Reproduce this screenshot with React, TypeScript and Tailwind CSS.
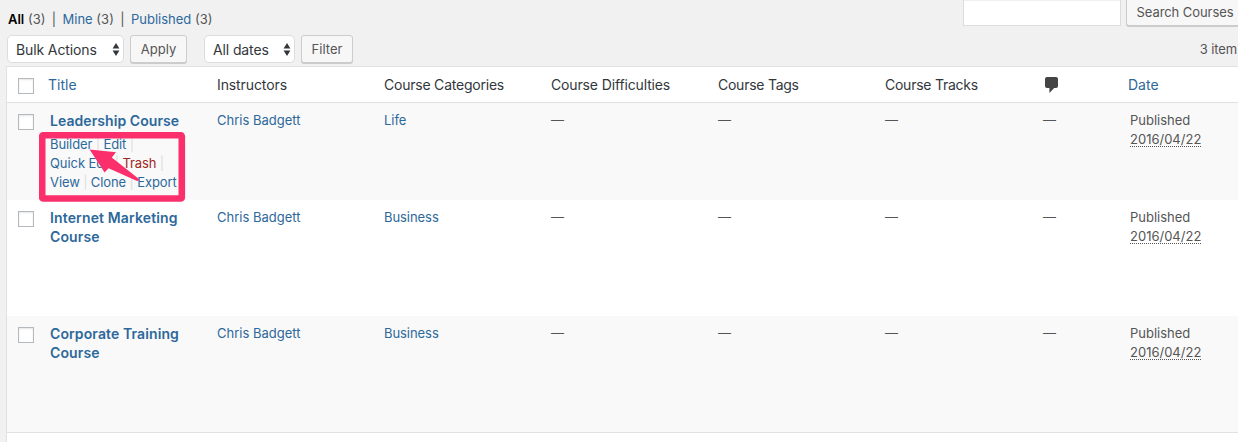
import type { ReactNode } from 'react';

const LINK = 'text-[#2d689b]';
const GRID = 'grid grid-cols-[33px_167px_167px_167px_167px_167px_158px_87px_160px]';

const courses = [
    { title: ['Leadership Course'], category: 'Life', height: 'h-[97px]', bg: 'bg-[#f9f9f9]', track: 'tracking-[0.06px]', actions: true },
    { title: ['Internet Marketing', 'Course'], category: 'Business', height: 'h-[116px]', bg: 'bg-white', track: 'tracking-[0.14px]', actions: false },
    { title: ['Corporate Training', 'Course'], category: 'Business', height: 'h-[116px]', bg: 'bg-[#f9f9f9]', track: 'tracking-[0.11px]', actions: false },
];

const headings = [
    { label: 'Instructors', track: 'tracking-[-0.1px]' },
    { label: 'Course Categories', track: 'tracking-[-0.22px]' },
    { label: 'Course Difficulties', track: 'tracking-[-0.14px]' },
    { label: 'Course Tags', track: 'tracking-[-0.25px]' },
    { label: 'Course Tracks', track: 'tracking-[-0.25px]' },
];

function Checkbox() {
    return <span className="block h-4 w-4 border border-[#b4b9be] bg-white shadow-[inset_0_1px_2px_rgba(0,0,0,0.1)]" />;
}

function Select({ label, width }: { label: string; width: string }) {
    return (
        <div className={`flex h-7 items-center justify-between rounded-[5px] border border-[#ddd] bg-white pl-2 pr-[3px] text-[14px] tracking-[-0.12px] text-[#32373c] ${width}`}>
            <span>{label}</span>
            <svg className="h-[13px] w-[8px]" viewBox="0 0 8 13" fill="#32373c">
                <path d="M4 0L7.4 5.4H0.6zM4 13L0.6 7.6H7.4z" />
            </svg>
        </div>
    );
}

function Button({ children, className }: { children: ReactNode; className: string }) {
    return (
        <button className={`flex items-center justify-center rounded-[3px] border border-[#ccc] bg-[#f7f7f7] pt-px text-[13px] text-[#555] shadow-[0_1px_0_#ccc] ${className}`}>
            {children}
        </button>
    );
}

function Sep() {
    return <span className="mx-[3.4px] text-[#ddd]">|</span>;
}

function RowActions() {
    return (
        <div className={`relative mt-[5px] text-[13px] leading-[19px] tracking-[-0.08px] ${LINK}`}>
            <div>Builder<Sep />Edit<Sep /></div>
            <div>Quick Edit<Sep /><span className="text-[#a02622]">Trash</span><Sep /></div>
            <div>View<Sep />Clone<Sep />Export</div>
            {/* callout drawn over the row actions */}
            <svg className="absolute -left-[11px] -top-[4px] h-[71px] w-[147px]" viewBox="39 131 147 71">
                <rect x="42.2" y="135.3" width="139.6" height="63.2" rx="1" fill="none" stroke="#fb2f6c" strokeWidth="6.6" />
                <path d="M89.6 149.6L116 152.2L111.8 157.6L139.3 179.2Q138.5 181.5 136.5 180.8L108.6 168.2L104.6 172.4z" fill="#fb2f6c" />
            </svg>
        </div>
    );
}

export default function App() {
    return (
        <div className="h-[442px] w-[1238px] overflow-hidden bg-[#f1f1f1] font-['Inter','Liberation_Sans',sans-serif] text-[13px] text-[#555] whitespace-nowrap">
            <div className="flex h-[35px] justify-between">
                <div className="flex gap-[6.4px] pl-2 pt-[10px] leading-[19px]">
                    <span><b className="font-semibold text-black">All</b> (3)</span>
                    <span>|</span>
                    <span><span className={LINK}>Mine</span> (3)</span>
                    <span>|</span>
                    <span><span className={LINK}>Published</span> (3)</span>
                </div>
                <div className="flex gap-[5px]">
                    <div className="h-[26px] w-[158px] border border-t-0 border-[#ddd] bg-white shadow-[inset_0_1px_0_rgba(0,0,0,0.06)]" />
                    <Button className="h-[26px] w-[118px] -mr-[6px] rounded-t-none border-t-0 tracking-[-0.07px]">Search Courses</Button>
                </div>
            </div>

            <div className="flex h-[31px] items-start pl-[7px]">
                <Select label="Bulk Actions" width="w-[117px]" />
                <Button className="ml-[6px] h-[28px] w-[57px]">Apply</Button>
                <div className="w-[17px]" />
                <Select label="All dates" width="w-[91px]" />
                <Button className="ml-[6px] h-[28px] w-[52px]">Filter</Button>
                <span className="ml-auto pt-[5px] pr-px leading-[19px] tracking-[-0.1px]">3 item</span>
            </div>

            <div className="h-[400px] w-[1273px] border border-[#e1e1e1] bg-white ml-[6px]">
                <div className={`${GRID} h-9 items-center border-b border-[#e1e1e1] text-[14px] text-[#32373c]`}>
                    <div className="pl-[11px] pt-[2px]"><Checkbox /></div>
                    <div className={`pl-2 ${LINK}`}>Title</div>
                    {headings.map((h) => (
                        <div key={h.label} className={`pl-[10px] ${h.track}`}>{h.label}</div>
                    ))}
                    <div className="pl-[12px]">
                        <svg className="h-[16px] w-[13px]" viewBox="0 0 13 16" fill="#444">
                            <path d="M2 0H11Q13 0 13 2V9Q13 11 11 11H9.2L4.4 16V11H2Q0 11 0 9V2Q0 0 2 0z" />
                        </svg>
                    </div>
                    <div className={`pl-2 ${LINK}`}>Date</div>
                </div>

                {courses.map((c) => (
                    <div key={c.title[0]} className={`${GRID} ${c.height} ${c.bg} pt-2 leading-[19px]`}>
                        <div className="pl-[11px] pt-[3px]"><Checkbox /></div>
                        <div className="pl-[10px]">
                            <div className={`text-[14px] font-semibold ${c.track} ${LINK}`}>
                                {c.title.map((line) => <div key={line}>{line}</div>)}
                            </div>
                            {c.actions && <RowActions />}
                        </div>
                        <div className={`pl-[10px] ${LINK}`}>Chris Badgett</div>
                        <div className={`pl-[10px] tracking-[-0.06px] ${LINK}`}>{c.category}</div>
                        <div className="pl-[10px]">—</div>
                        <div className="pl-[10px]">—</div>
                        <div className="pl-[10px]">—</div>
                        <div className="pl-[10px]">—</div>
                        <div className="pl-[10px]">
                            <div>Published</div>
                            <span className="underline decoration-dotted decoration-1 underline-offset-2 [text-decoration-skip-ink:none]">2016/04/22</span>
                        </div>
                    </div>
                ))}
                <div className="border-t border-[#e1e1e1]" />
            </div>
        </div>
    );
}
